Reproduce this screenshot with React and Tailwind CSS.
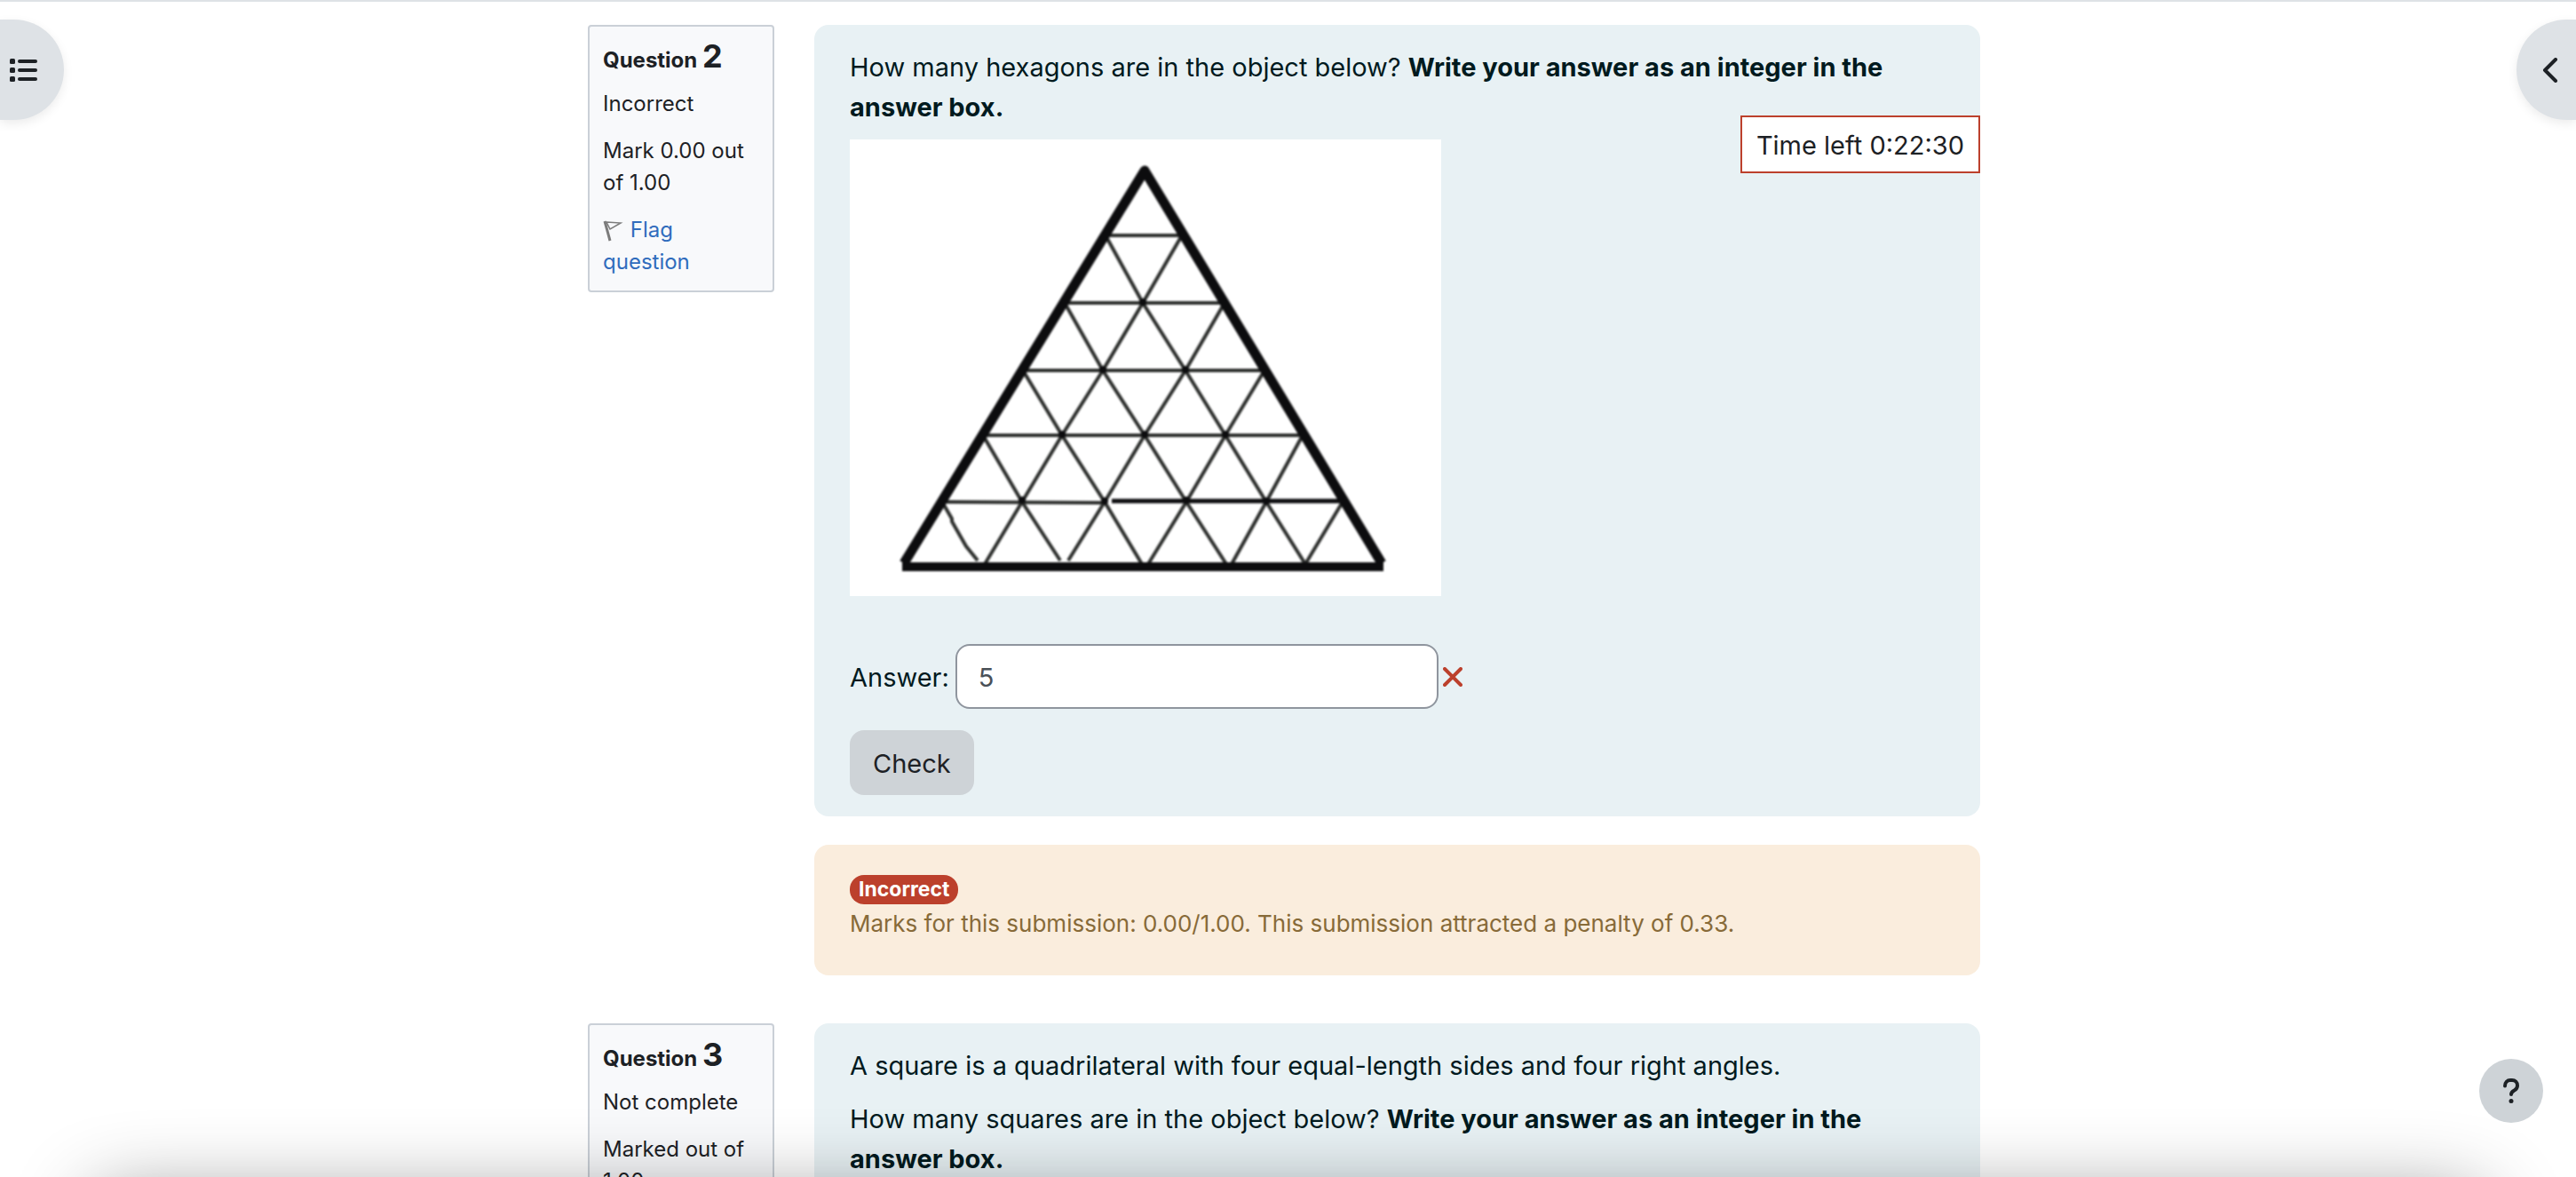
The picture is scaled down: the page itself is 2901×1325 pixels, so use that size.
const innerLines = [
  "M288 108H374",
  "M242 184H422",
  "M195 260H467",
  "M150 333H510",
  "M104 408L287 409",
  "M288 108L330 184L378 260L423 333L469 408L513 478",
  "M242 184L285 260L332 333L379 408L424 478",
  "M195 260L239 333L287 408L329 478",
  "M150 333L194 408L237 474",
  "M104 408L115 427V430L131 458L144 474",
  "M374 108L330 184L285 260L239 333L194 408L152 478",
  "M422 184L378 260L332 333L287 408L246 474",
  "M467 260L423 333L379 408L336 478",
  "M510 333L469 408L430 478",
  "M555 408L513 478",
];

const nodes = [
  [330, 183], [285, 259], [378, 259], [239, 332], [332, 332],
  [423, 332], [194, 406], [287, 407], [379, 406], [469, 407],
];

function TriangleFigure() {
  return (
    <svg
      className="block h-auto w-[666px] max-w-full bg-white"
      viewBox="0 0 666 514"
      role="img"
      aria-label="Triangle divided into smaller triangles"
      fill="none"
    >
      <g className="blur-[1px]">
        <g stroke="#2c2e2c" strokeWidth="4" strokeLinejoin="round">
          {innerLines.map((d) => (
            <path key={d} d={d} />
          ))}
        </g>
        {nodes.map(([x, y]) => (
          <circle key={`${x}-${y}`} cx={x} cy={y} r="4" fill="#0c0c0e" />
        ))}
        <path d="M295 407H555" stroke="#0c0c0e" strokeWidth="5" />
        <path d="M61 477L332 35L599 477" stroke="#0c0c0e" strokeWidth="11" strokeLinejoin="round" />
        <path d="M59 481H601" stroke="#0c0c0e" strokeWidth="10" />
      </g>
    </svg>
  );
}

function FlagIcon() {
  return (
    <svg className="inline-block h-6 w-6" viewBox="0 0 24 24" fill="none" stroke="#7b7b7b" aria-hidden="true">
      <path d="M2 1L8 23" strokeWidth="3" />
      <path d="M4 2L20 3L8 10Z" strokeWidth="1.5" />
    </svg>
  );
}

function QuestionInfo({ number, state, grade, flag }) {
  return (
    <aside className="w-[210px] shrink-0 self-start rounded-[4px] border-2 border-[#cad0d7] bg-[#f8f9fb] px-[15px] pt-[15px] pb-[6px] text-[24px] leading-9 text-[#1d2125]">
      <h3 className="mb-[13px] font-bold leading-9">
        Question <span className="text-[36px]">{number}</span>
      </h3>
      <p className="mb-[17px]">{state}</p>
      <p className="mb-[17px]">{grade}</p>
      {flag && (
        <a href="#flag" className="mb-2 block text-[#306cbd]">
          <FlagIcon /> Flag question
        </a>
      )}
    </aside>
  );
}

export default function App() {
  return (
    <div className="relative h-screen overflow-hidden border-t-2 border-[#dee2e6] bg-white font-[Inter,sans-serif] text-[29px] leading-[45px]">
      <main className="mx-auto w-full max-w-[1577px] pt-[26px] pr-[9px]">
        <section className="flex items-stretch gap-[45px]">
          <QuestionInfo number="2" state="Incorrect" grade="Mark 0.00 out of 1.00" flag />
          <div className="min-w-0 flex-1">
            <div className="relative rounded-2xl bg-[#e8f1f4] px-10 pt-[25px] pb-6 text-[#001a1e]">
              <p className="mb-[14px]">
                How many hexagons are in the object below?{" "}
                <strong className="font-bold">Write your answer as an integer in the answer box.</strong>
              </p>
              <TriangleFigure />
              <div className="mt-[54px] flex items-center">
                <label htmlFor="answer" className="pt-px">Answer:</label>
                <input
                  id="answer"
                  type="text"
                  defaultValue="5"
                  readOnly
                  className="ml-[7px] h-[73px] w-[544px] rounded-2xl border-2 border-[#8f959e] bg-white px-6 pt-px text-[#495057]"
                />
                <svg className="ml-[5px] h-[22px] w-[22px]" viewBox="0 0 22 22" fill="none" stroke="#bc402c" strokeWidth="4" strokeLinecap="round" aria-label="Incorrect">
                  <path d="M2 2L20 20M20 2L2 20" />
                </svg>
              </div>
              <button type="button" className="mt-6 block h-[73px] rounded-2xl bg-[#ced3d7] px-[26px] pt-px text-[#1d2125]">
                Check
              </button>
              <div role="timer" className="absolute top-[102px] right-0 border-2 border-[#bc402c] bg-white px-4 pt-[9px] pb-[7px] text-[#1d2125]">
                Time left 0:22:30
              </div>
            </div>
            <div className="mt-8 rounded-2xl bg-[#faeddd] px-10 pt-[34px] pb-[38px] text-[26px] leading-10 text-[#876a38]">
              <span className="mb-[2px] block w-fit rounded-2xl bg-[#bc402c] px-[10px] text-[23px] leading-[33px] font-bold text-white">
                Incorrect
              </span>
              <p>Marks for this submission: 0.00/1.00. This submission attracted a penalty of 0.33.</p>
            </div>
          </div>
        </section>
        <section className="mt-[54px] flex items-stretch gap-[45px]">
          <QuestionInfo number="3" state="Not complete" grade="Marked out of 1.00" />
          <div className="min-w-0 flex-1 rounded-2xl bg-[#e8f1f4] px-10 pt-[25px] pb-6 text-[#001a1e]">
            <p className="mb-[15px]">A square is a quadrilateral with four equal-length sides and four right angles.</p>
            <p>
              How many squares are in the object below?{" "}
              <strong className="font-bold">Write your answer as an integer in the answer box.</strong>
            </p>
          </div>
        </section>
      </main>

      <button type="button" aria-label="Open course index" className="absolute top-5 left-0 h-[113px] w-[72px] rounded-r-full bg-[#dee2e6] shadow-[0_4px_12px_rgba(0,0,0,0.08)]">
        <svg className="ml-[11px] h-[26px] w-8" viewBox="0 0 32 26" fill="#1d2125" aria-hidden="true">
          <rect x="0" y="0" width="6" height="6" rx="1.5" />
          <rect x="0" y="10" width="6" height="6" rx="1.5" />
          <rect x="0" y="20" width="6" height="6" rx="1.5" />
          <rect x="9" y="1" width="22" height="4" rx="2" />
          <rect x="9" y="11" width="22" height="4" rx="2" />
          <rect x="9" y="21" width="22" height="4" rx="2" />
        </svg>
      </button>
      <button type="button" aria-label="Open block drawer" className="absolute top-5 right-0 h-[113px] w-[67px] rounded-l-full bg-[#dee2e6] shadow-[0_4px_12px_rgba(0,0,0,0.08)]">
        <svg className="ml-[29px] h-7 w-[18px]" viewBox="0 0 18 28" fill="none" stroke="#1d2125" strokeWidth="4" strokeLinecap="round" strokeLinejoin="round" aria-hidden="true">
          <path d="M15 2L3 14L15 26" />
        </svg>
      </button>
      <button type="button" aria-label="Help" className="absolute right-[37px] bottom-[61px] flex h-[72px] w-[72px] items-center justify-center rounded-full bg-[#ced3d7]">
        <svg className="h-7 w-[18px]" viewBox="0 0 18 28" fill="none" aria-hidden="true">
          <path d="M2 8.500C2 4.500 4.500 2 8 2H10C13.500 2 16 4.500 16 8C16 11 14.500 12.500 12.500 13.500C10.200 14.800 9 15.700 9 18" stroke="#1d2125" strokeWidth="4" strokeLinecap="round" />
          <circle cx="9" cy="25.500" r="2.500" fill="#1d2125" />
        </svg>
      </button>
      <div aria-hidden="true" className="pointer-events-none absolute top-full right-[107px] left-[107px] mt-6 h-40 rounded-2xl shadow-[0_0_90px_rgba(0,0,0,0.45)]" />
    </div>
  );
}
